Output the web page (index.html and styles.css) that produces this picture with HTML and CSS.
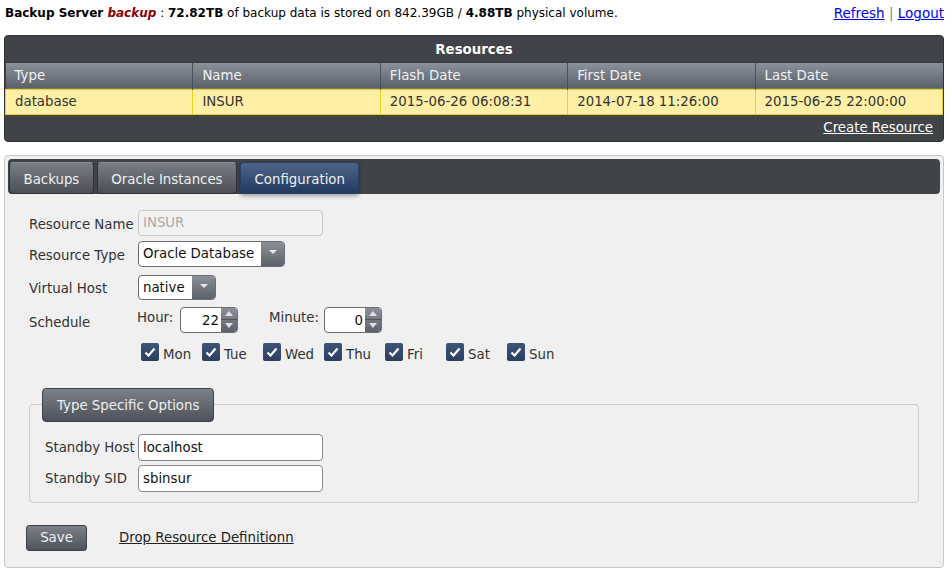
FILE: index.html
```html
<!DOCTYPE html>
<html>
<head>
<meta charset="utf-8">
<link rel="stylesheet" href="styles.css">
</head>
<body>
<div class="topbar">
  <div class="summary"><b>Backup Server <i class="srv">backup</i></b> : <b>72.82TB</b> of backup data is stored on 842.39GB / <b>4.88TB</b> physical volume.</div>
  <div class="toplinks"><a href="#">Refresh</a> <span class="sep">|</span> <a href="#">Logout</a></div>
</div>

<div class="panel">
  <table class="restable">
    <thead>
      <tr><th colspan="5" class="title">Resources</th></tr>
      <tr class="cols"><th>Type</th><th>Name</th><th>Flash Date</th><th>First Date</th><th>Last Date</th></tr>
    </thead>
    <tbody>
      <tr class="sel"><td>database</td><td>INSUR</td><td>2015-06-26 06:08:31</td><td>2014-07-18 11:26:00</td><td>2015-06-25 22:00:00</td></tr>
    </tbody>
  </table>
  <div class="panelfoot"><a href="#">Create Resource</a></div>
</div>

<div class="config">
  <div class="tabbar">
    <div class="tab">Backups</div>
    <div class="tab">Oracle Instances</div>
    <div class="tab active">Configuration</div>
  </div>
  <div class="form">
    <div class="row r1">
      <label class="lbl">Resource Name</label>
      <div class="input disabled w185">INSUR</div>
    </div>
    <div class="row r2">
      <label class="lbl">Resource Type</label>
      <div class="select w147"><span class="val">Oracle Database</span><span class="arrow"><svg width="8" height="5" viewBox="0 0 8 5"><path d="M0 0H8L4 4Z" fill="#e8e8e8"/></svg></span></div>
    </div>
    <div class="row r3">
      <label class="lbl">Virtual Host</label>
      <div class="select w78 h25"><span class="val">native</span><span class="arrow"><svg width="8" height="5" viewBox="0 0 8 5"><path d="M0 0H8L4 4Z" fill="#e8e8e8"/></svg></span></div>
    </div>
    <div class="row r4">
      <label class="lbl sched">Schedule</label>
      <div class="schedwrap">
        <div class="timerow">
          <span class="tlabel">Hour:</span>
          <div class="spin"><span class="num">22</span><span class="btns"><span class="up"><svg width="8" height="5" viewBox="0 0 8 5"><path d="M0 5H8L4 0Z" fill="#e0e0e0"/></svg></span><span class="dn"><svg width="8" height="5" viewBox="0 0 8 5"><path d="M0 0H8L4 5Z" fill="#e0e0e0"/></svg></span></span></div>
          <span class="tlabel min">Minute:</span>
          <div class="spin"><span class="num">0</span><span class="btns"><span class="up"><svg width="8" height="5" viewBox="0 0 8 5"><path d="M0 5H8L4 0Z" fill="#e0e0e0"/></svg></span><span class="dn"><svg width="8" height="5" viewBox="0 0 8 5"><path d="M0 0H8L4 5Z" fill="#e0e0e0"/></svg></span></span></div>
        </div>
        <div class="days">
          <span class="day"><span class="cb"><svg width="12" height="10" viewBox="0 0 12 10"><path d="M1.5 5.5L4.5 8.5L10.5 1.5" stroke="#fff" stroke-width="2.2" fill="none"/></svg></span>Mon</span>
          <span class="day"><span class="cb"><svg width="12" height="10" viewBox="0 0 12 10"><path d="M1.5 5.5L4.5 8.5L10.5 1.5" stroke="#fff" stroke-width="2.2" fill="none"/></svg></span>Tue</span>
          <span class="day"><span class="cb"><svg width="12" height="10" viewBox="0 0 12 10"><path d="M1.5 5.5L4.5 8.5L10.5 1.5" stroke="#fff" stroke-width="2.2" fill="none"/></svg></span>Wed</span>
          <span class="day"><span class="cb"><svg width="12" height="10" viewBox="0 0 12 10"><path d="M1.5 5.5L4.5 8.5L10.5 1.5" stroke="#fff" stroke-width="2.2" fill="none"/></svg></span>Thu</span>
          <span class="day"><span class="cb"><svg width="12" height="10" viewBox="0 0 12 10"><path d="M1.5 5.5L4.5 8.5L10.5 1.5" stroke="#fff" stroke-width="2.2" fill="none"/></svg></span>Fri</span>
          <span class="day"><span class="cb"><svg width="12" height="10" viewBox="0 0 12 10"><path d="M1.5 5.5L4.5 8.5L10.5 1.5" stroke="#fff" stroke-width="2.2" fill="none"/></svg></span>Sat</span>
          <span class="day"><span class="cb"><svg width="12" height="10" viewBox="0 0 12 10"><path d="M1.5 5.5L4.5 8.5L10.5 1.5" stroke="#fff" stroke-width="2.2" fill="none"/></svg></span>Sun</span>
        </div>
      </div>
    </div>

    <fieldset class="opts">
      <legend>Type Specific Options</legend>
      <div class="orow">
        <label class="olbl">Standby Host</label>
        <div class="input w185 h27">localhost</div>
      </div>
      <div class="orow o2">
        <label class="olbl">Standby SID</label>
        <div class="input w185 h27">sbinsur</div>
      </div>
    </fieldset>

    <div class="actions">
      <button class="btn">Save</button>
      <a href="#" class="droplink">Drop Resource Definitionn</a>
    </div>
  </div>
</div>
</body>
</html>
```
FILE: styles.css
```css
html, body { margin: 0; padding: 0; background: #fff; }
body {
  font-family: "DejaVu Sans", Verdana, sans-serif;
  font-size: 13.33px;
  color: #333;
  padding: 0 6px 0 4px;
}
label { white-space: nowrap; }
.topbar {
  display: flex;
  justify-content: space-between;
  align-items: flex-start;
  height: 35px;
  font-size: 12px;
  color: #000;
  padding-top: 6px;
  box-sizing: border-box;
}
.summary { padding-left: 1px; }
.srv { color: #8b0000; }
.toplinks { font-size: 13.5px; margin-top: -1px; }
.toplinks a { color: #00e; }
.toplinks .sep { color: #888; }

.panel {
  background: #404347;
  border-radius: 4px;
  overflow: hidden;
  border: 1px solid #2f3236;
}
.restable {
  width: 100%;
  border-collapse: collapse;
  table-layout: fixed;
}
.restable th.title {
  height: 26px;
  color: #fff;
  font-weight: bold;
  text-align: center;
  padding: 2px 0 0 0;
  box-sizing: border-box;
}
.restable tr.cols th {
  height: 26px;
  background: linear-gradient(#8c929c, #5a606a);
  color: #f2f2f2;
  font-weight: normal;
  text-align: left;
  padding: 0 0 0 9px;
  border-left: 1px solid #4a4f57;
  border-top: 1px solid #363a3f;
}
.restable tr.cols th:first-child { border-left: none; }
.restable tr.sel td {
  height: 24px;
  background: #fff0a5;
  color: #333;
  padding: 0 0 0 9px;
  border: 1px solid #f2cf1a;
}
.panelfoot {
  height: 26px;
  display: flex;
  justify-content: flex-end;
  align-items: center;
  padding-right: 10px;
}
.panelfoot a { color: #fff; }

.config {
  margin-top: 13px;
  background: #f0f0f0;
  border: 1px solid #c8c8c8;
  border-radius: 4px;
  padding: 3px;
  height: 413px;
  box-sizing: border-box;
}
.tabbar {
  background: #404347;
  border-radius: 4px;
  height: 35px;
  display: flex;
  gap: 3px;
  padding: 3px 0 0 1px;
  box-sizing: border-box;
}
.tab {
  height: 32px;
  line-height: 33px;
  padding: 0 13.5px;
  color: #f0f0f0;
  background: linear-gradient(#787d86, #4a4f57);
  border-radius: 4px;
  border: 1px solid #2f3236;
  border-top-color: #8a8f97;
  box-sizing: border-box;
}
.tab.active {
  background: linear-gradient(#4f6489, #233a60);
  border-color: #2a3f66;
  box-shadow: 0 2px 4px rgba(0,0,0,0.35);
}

.form { padding: 16px 0 0 21px; }
.row { display: flex; align-items: center; }
.lbl { width: 109px; flex: none; padding-top: 3px; }
.r2 { margin-top: 5px; }
.r3 { margin-top: 8px; }
.r4 { margin-top: 7px; align-items: flex-start; }
.sched { margin-top: 5px; }

.input {
  height: 26px;
  box-sizing: border-box;
  border: 1px solid #8a8a8a;
  border-radius: 4px;
  background: #fff;
  padding-left: 4px;
  display: flex;
  align-items: center;
  color: #111;
}
.input.disabled { border-color: #c8c8c8; background: #f2f2f2; color: #aaa; }
.w185 { width: 185px; }
.h27 { height: 27px; }

.select {
  height: 26px;
  box-sizing: border-box;
  border: 1px solid #6a6e75;
  border-radius: 4px;
  background: #fff;
  display: flex;
  overflow: hidden;
  color: #111;
}
.w147 { width: 147px; }
.w78 { width: 78px; }
.h25 { height: 25px; }
.select .val { flex: 1; padding-left: 4px; display: flex; align-items: center; }
.select .arrow {
  width: 23px;
  background: linear-gradient(#8a8f98, #5c616a);
  display: flex;
  align-items: center;
  justify-content: center;
}
.select .arrow svg { margin-top: -2px; }

.schedwrap { display: flex; flex-direction: column; }
.timerow { display: flex; align-items: flex-start; }
.tlabel { margin-left: -1px; margin-top: 3px; width: 43px; }
.tlabel.min { margin-left: 31px; width: 55px; }
.spin {
  width: 58px;
  height: 26px;
  box-sizing: border-box;
  border: 1px solid #6a6e75;
  border-radius: 4px;
  background: #fff;
  display: flex;
  overflow: hidden;
  color: #111;
}
.spin .num { flex: 1; text-align: right; padding-right: 2px; line-height: 25px; }
.spin .btns { width: 16px; display: flex; flex-direction: column; background: linear-gradient(#8a8f98, #5c616a); }
.spin .up, .spin .dn { flex: 1; display: flex; align-items: center; justify-content: center; }
.spin .up { border-bottom: 1px solid #50555d; }

.days { display: flex; margin-top: 10px; margin-left: 3px; }
.day { width: 61px; display: flex; align-items: flex-end; height: 20px; line-height: 1; padding-bottom: 1px; box-sizing: border-box; }
.cb {
  width: 18px;
  height: 18px;
  background: linear-gradient(#3e5478, #2b3f60);
  border-radius: 2px;
  display: inline-flex;
  align-items: center;
  justify-content: center;
  margin-right: 4px;
  margin-bottom: 1px;
}

.opts {
  margin: 25px 21px 0 0;
  border: 1px solid #cdcdcd;
  border-radius: 4px;
  padding: 0 0 10px 15px;
  min-width: 0;
}
.opts legend {
  margin-left: -3px;
  height: 34px;
  box-sizing: border-box;
  padding: 0 14px;
  line-height: 34px;
  color: #f0f0f0;
  background: linear-gradient(#7b8089, #4e535b);
  border: 1px solid #3e4248;
  border-radius: 4px;
}
.orow { display: flex; align-items: center; margin-top: 12px; }
.orow.o2 { margin-top: 4px; }
.olbl { width: 93px; flex: none; padding-top: 1px; }

.actions { display: flex; align-items: center; margin-top: 22px; margin-left: -3px; }
.btn {
  font-family: inherit;
  font-size: 13.33px;
  color: #f0f0f0;
  height: 26px;
  width: 61px;
  background: linear-gradient(#7b8089, #4e535b);
  border: 1px solid #3e4248;
  border-radius: 3px;
  padding: 0;
}
.droplink { margin-left: 32px; color: #222; }
```
